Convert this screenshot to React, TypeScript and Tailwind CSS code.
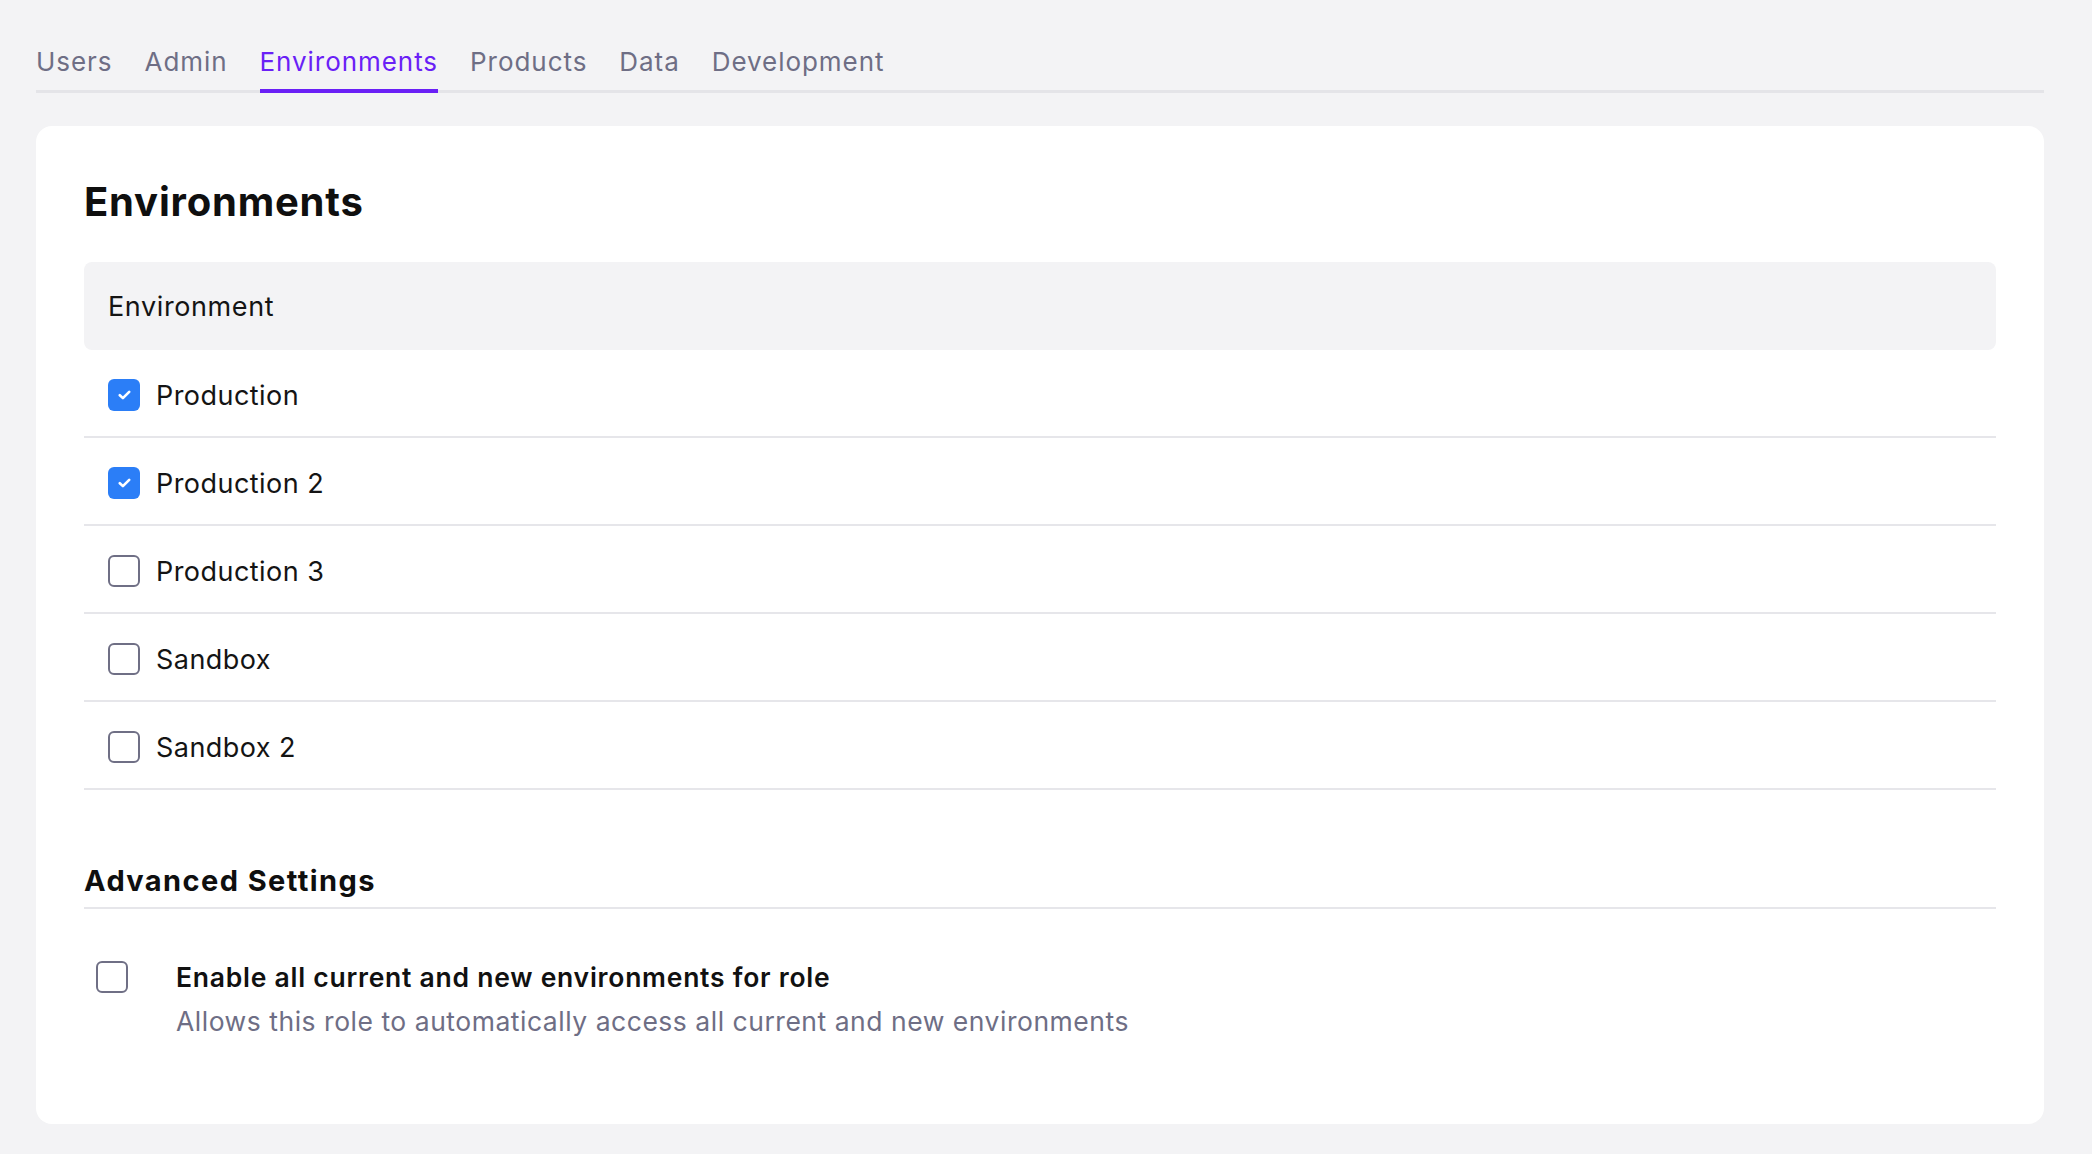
import { useState } from "react";

const TABS = ["Users", "Admin", "Environments", "Products", "Data", "Development"];

const ENVIRONMENTS = [
  { id: "production", name: "Production", enabled: true },
  { id: "production-2", name: "Production 2", enabled: true },
  { id: "production-3", name: "Production 3", enabled: false },
  { id: "sandbox", name: "Sandbox", enabled: false },
  { id: "sandbox-2", name: "Sandbox 2", enabled: false },
];

function Checkbox({
  checked,
  onChange,
}: {
  checked: boolean;
  onChange: () => void;
}) {
  return (
    <button
      type="button"
      role="checkbox"
      aria-checked={checked}
      onClick={onChange}
      className={`flex h-8 w-8 shrink-0 items-center justify-center rounded-[6px] ${
        checked
          ? "bg-[#2b7ef7]"
          : "border-2 border-[#6f6f85] bg-white"
      }`}
    >
      {checked && (
        <svg width="13" height="10" viewBox="0 0 13 10" fill="none">
          <path
            d="M1.8 5.2 4.9 8.1 11.2 1.8"
            stroke="white"
            strokeWidth="2.6"
            strokeLinecap="round"
            strokeLinejoin="round"
          />
        </svg>
      )}
    </button>
  );
}

export default function App() {
  const [envs, setEnvs] = useState(ENVIRONMENTS);
  const [allEnvs, setAllEnvs] = useState(false);

  const toggle = (id: string) =>
    setEnvs((prev) =>
      prev.map((e) => (e.id === id ? { ...e, enabled: !e.enabled } : e))
    );

  return (
    <div className="min-h-screen bg-[#f3f3f5] pl-9 pr-12 pt-[44px] pb-8 font-['Inter',sans-serif] text-[#111111]">
      {/* tabs */}
      <nav className="flex gap-[32px] border-b-[3px] border-[#e4e4e8]">
        {TABS.map((tab) => {
          const active = tab === "Environments";
          return (
            <button
              key={tab}
              type="button"
              className={`-mb-[3px] border-b-4 pb-[9px] text-[26px] leading-[36px] tracking-[0.95px] ${
                active
                  ? "border-[#6a1ff6] text-[#6a1ff6]"
                  : "border-transparent text-[#6e6e85]"
              }`}
            >
              {tab}
            </button>
          );
        })}
      </nav>

      {/* card */}
      <div className="mt-[33px] rounded-2xl bg-white px-12 pt-[52px] pb-[85px]">
        <h1 className="text-[40px] leading-[48px] font-bold tracking-[0.8px] text-[#0f0f0f]">
          Environments
        </h1>

        <div className="mt-[36px]">
          <div className="flex h-[88px] items-center rounded-lg bg-[#f3f3f5] px-6 pt-[2px] text-[27px] tracking-[0.6px] text-[#141414]">
            Environment
          </div>
          {envs.map((env) => (
            <div
              key={env.id}
              className="flex h-[88px] items-center gap-4 border-b-2 border-[#e6e6ea] px-6 pt-[3px]"
            >
              <Checkbox checked={env.enabled} onChange={() => toggle(env.id)} />
              <span className="pt-[3px] text-[27px] tracking-[0.45px] text-[#141414]">
                {env.name}
              </span>
            </div>
          ))}
        </div>

        <h2 className="mt-[71px] border-b-2 border-[#e6e6ea] pb-[6px] text-[29px] leading-[40px] font-bold tracking-[1.4px] text-[#0f0f0f]">
          Advanced Settings
        </h2>

        <div className="flex gap-12 px-3 pt-[50px]">
          <div className="pt-[2px]">
            <Checkbox checked={allEnvs} onChange={() => setAllEnvs(!allEnvs)} />
          </div>
          <div>
            <div className="text-[26.5px] leading-[36px] font-semibold tracking-[0.75px] text-[#111111]">
              Enable all current and new environments for role
            </div>
            <div className="mt-[8px] text-[26.5px] leading-[36px] tracking-[0.52px] text-[#6e6e85]">
              Allows this role to automatically access all current and new
              environments
            </div>
          </div>
        </div>
      </div>
    </div>
  );
}
